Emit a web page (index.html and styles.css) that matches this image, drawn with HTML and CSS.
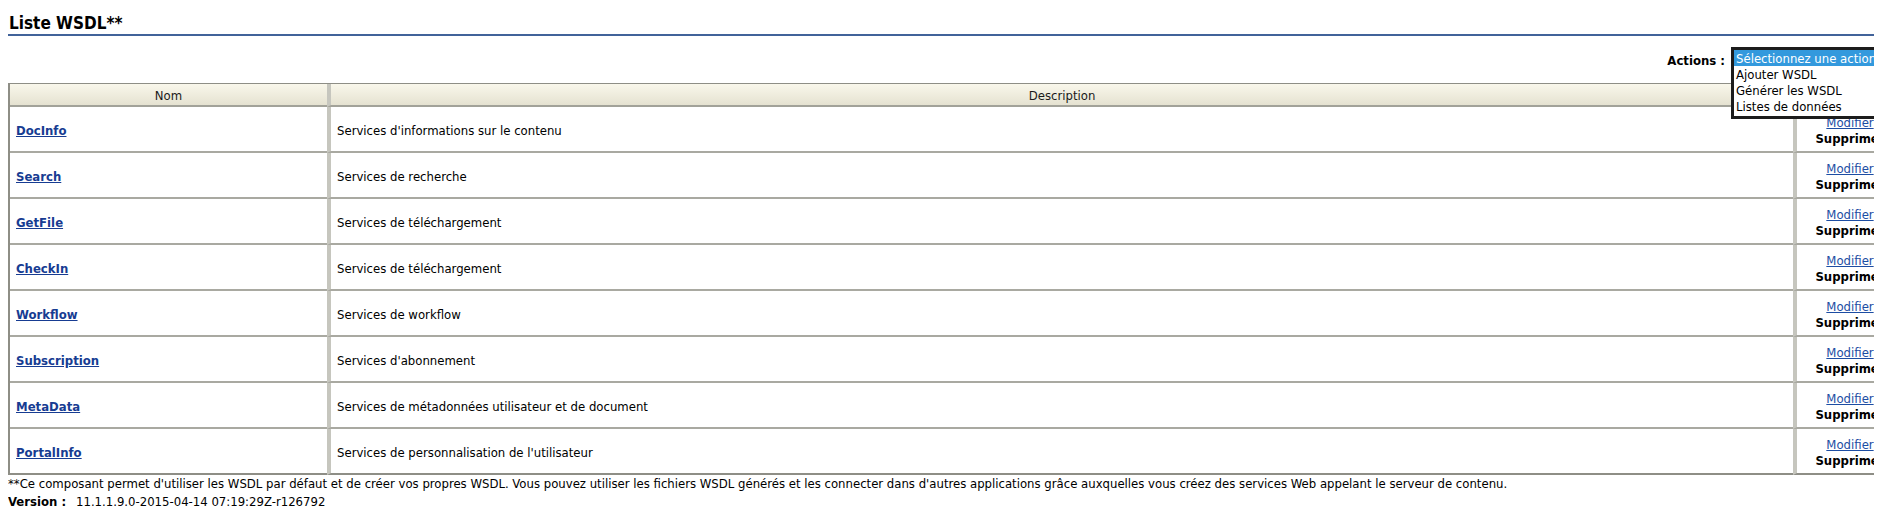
FILE: index.html
```html
<!DOCTYPE html>
<html lang="fr">
<head>
<meta charset="utf-8">
<title>Liste WSDL</title>
<link rel="stylesheet" href="styles.css">
</head>
<body>
<div class="page">
  <h1 class="page-title">Liste WSDL**</h1>

  <div class="actions-bar">
    <span class="actions-label">Actions :</span>
    <div class="actions-select">
      <ul class="listbox">
        <li class="option selected">Sélectionnez une action</li>
        <li class="option">Ajouter WSDL</li>
        <li class="option">Générer les WSDL</li>
        <li class="option">Listes de données</li>
      </ul>
    </div>
  </div>

  <table class="wsdl-table">
    <thead>
      <tr>
        <th class="col-name">Nom</th>
        <th class="col-desc">Description</th>
        <th class="col-act"></th>
      </tr>
    </thead>
    <tbody>
      <tr>
        <td class="col-name"><a class="name-link" href="#">DocInfo</a></td>
        <td class="col-desc">Services d'informations sur le contenu</td>
        <td class="col-act"><a class="edit-link" href="#">Modifier</a><br><span class="delete">Supprimer</span></td>
      </tr>
      <tr>
        <td class="col-name"><a class="name-link" href="#">Search</a></td>
        <td class="col-desc">Services de recherche</td>
        <td class="col-act"><a class="edit-link" href="#">Modifier</a><br><span class="delete">Supprimer</span></td>
      </tr>
      <tr>
        <td class="col-name"><a class="name-link" href="#">GetFile</a></td>
        <td class="col-desc">Services de téléchargement</td>
        <td class="col-act"><a class="edit-link" href="#">Modifier</a><br><span class="delete">Supprimer</span></td>
      </tr>
      <tr>
        <td class="col-name"><a class="name-link" href="#">CheckIn</a></td>
        <td class="col-desc">Services de téléchargement</td>
        <td class="col-act"><a class="edit-link" href="#">Modifier</a><br><span class="delete">Supprimer</span></td>
      </tr>
      <tr>
        <td class="col-name"><a class="name-link" href="#">Workflow</a></td>
        <td class="col-desc">Services de workflow</td>
        <td class="col-act"><a class="edit-link" href="#">Modifier</a><br><span class="delete">Supprimer</span></td>
      </tr>
      <tr>
        <td class="col-name"><a class="name-link" href="#">Subscription</a></td>
        <td class="col-desc">Services d'abonnement</td>
        <td class="col-act"><a class="edit-link" href="#">Modifier</a><br><span class="delete">Supprimer</span></td>
      </tr>
      <tr>
        <td class="col-name"><a class="name-link" href="#">MetaData</a></td>
        <td class="col-desc">Services de métadonnées utilisateur et de document</td>
        <td class="col-act"><a class="edit-link" href="#">Modifier</a><br><span class="delete">Supprimer</span></td>
      </tr>
      <tr class="last">
        <td class="col-name"><a class="name-link" href="#">PortalInfo</a></td>
        <td class="col-desc">Services de personnalisation de l'utilisateur</td>
        <td class="col-act"><a class="edit-link" href="#">Modifier</a><br><span class="delete">Supprimer</span></td>
      </tr>
    </tbody>
  </table>

  <p class="note">**Ce composant permet d'utiliser les WSDL par défaut et de créer vos propres WSDL. Vous pouvez utiliser les fichiers WSDL générés et les connecter dans d'autres applications grâce auxquelles vous créez des services Web appelant le serveur de contenu.</p>
  <p class="version"><span class="version-label">Version :</span><span class="version-value">11.1.1.9.0-2015-04-14 07:19:29Z-r126792</span></p>
</div>
</body>
</html>
```
FILE: styles.css
```css
html {
  overflow: hidden;
}

html, body {
  background: #ffffff;
}

body {
  margin: 8px;
  font-family: "DejaVu Sans Condensed", "DejaVu Sans", sans-serif;
  font-size: 13px;
  line-height: 16px;
  color: #000000;
}

.page {
  margin-right: -8px;
  overflow: hidden;
}

.page-title {
  width: 1895px;
  margin: 4px 0 0;
  padding: 1px 0 1px 1px;
  font-size: 17px;
  line-height: 20px;
  font-weight: bold;
  color: #000000;
  border-bottom: 2px solid #41639a;
}

.actions-bar {
  width: 1895px;
  display: flex;
  justify-content: flex-end;
  align-items: center;
  gap: 6px;
  height: 24px;
  margin-top: 12px;
}

.actions-label {
  font-weight: bold;
  padding-top: 2px;
}

.actions-select {
  position: relative;
  width: 172px;
  height: 24px;
}

.listbox {
  position: absolute;
  top: -1px;
  left: 0;
  width: 200px;
  margin: 0;
  padding: 0 0 2px;
  list-style: none;
  background: #ffffff;
  border: 3px solid #1c1c1c;
  z-index: 5;
}

.option {
  height: 16px;
  line-height: 17px;
  padding-left: 2px;
  white-space: nowrap;
  color: #000000;
}

.option.selected {
  background: #3399dd;
  color: #ffffff;
}

.wsdl-table {
  width: 1895px;
  margin-top: 11px;
  table-layout: fixed;
  border-collapse: separate;
  border-spacing: 0;
  border-top: 1px solid #8e8e86;
  border-left: 2px solid #8e8e86;
}

.wsdl-table th,
.wsdl-table td {
  box-sizing: border-box;
  padding: 0 6px;
}

.wsdl-table th {
  height: 23px;
  padding-top: 2px;
  font-weight: normal;
  text-align: center;
  color: #1a1a1a;
  background: linear-gradient(#f9f7eb, #e5e2d1);
  border-bottom: 2px solid #a2a299;
}

.wsdl-table td {
  height: 46px;
  padding-top: 4px;
  vertical-align: middle;
  border-bottom: 2px solid #a9a9a1;
}

.wsdl-table tr.last td {
  border-bottom-color: #8e8e86;
}

.col-name {
  width: 317px;
}

.col-desc {
  width: 1466px;
}

.col-act {
  width: 110px;
  text-align: center;
}

.wsdl-table th.col-desc,
.wsdl-table th.col-act,
.wsdl-table td.col-desc,
.wsdl-table td.col-act {
  border-left: 4px solid #c6c6be;
}

.wsdl-table td.col-act {
  text-align: center;
}

.name-link {
  font-weight: bold;
  color: #173c92;
  text-decoration: underline;
}

.edit-link {
  color: #1d4da3;
  text-decoration: underline;
}

.delete {
  font-weight: bold;
  color: #000000;
}

.note {
  margin: 1px 0 0;
  line-height: 16px;
  white-space: nowrap;
}

.version {
  margin: 0;
  line-height: 17px;
  padding-top: 1px;
}

.version-label {
  display: inline-block;
  width: 68px;
  font-weight: bold;
}
```
